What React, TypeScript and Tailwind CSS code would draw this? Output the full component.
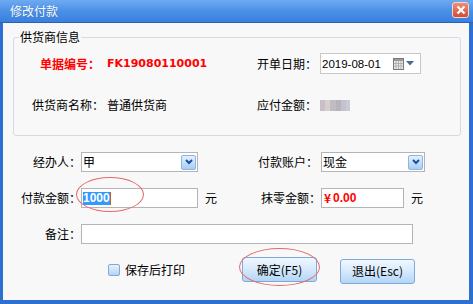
import React from "react";

const cjk = { fontFamily: '"Noto Sans CJK SC", "Noto Sans", sans-serif' };
const latin = { fontFamily: '"Liberation Sans", Arial, sans-serif' };
const tahoma = { fontFamily: '"DejaVu Sans", Verdana, sans-serif' };

function Chevron() {
  return (
    <div className="w-[15px] h-[15px] rounded-[2px] border border-[#8ab5e6] bg-gradient-to-b from-[#e4f0fd] to-[#a9cdf3] flex items-center justify-center">
      <svg width="8" height="6" viewBox="0 0 8 6">
        <path d="M1 1 L4 4 L7 1" stroke="#1b4f9c" strokeWidth="2" fill="none" />
      </svg>
    </div>
  );
}

function Select({ value, w }: { value: string; w: string }) {
  return (
    <div className={`${w} h-[20px] border border-[#b4b4b4] bg-white flex items-center justify-between pl-[1px] pr-[1px]`}>
      <span className="text-[12px] leading-[16px] text-black" style={cjk}>{value}</span>
      <Chevron />
    </div>
  );
}

export default function App() {
  return (
    <div className="w-[473px] h-[304px] bg-[#2c71d2] flex flex-col overflow-hidden" style={cjk}>
      {/* Title bar */}
      <div className="h-[23px] shrink-0 bg-gradient-to-b from-[#6eaaf0] via-[#4a90e6] to-[#3a80dc] border-b border-[#2762b8] flex items-center justify-between pl-[10px] pr-[4px]">
        <span className="text-[12px] leading-[14px] text-white" style={{ ...cjk, textShadow: "0 0 1px #3070c0" }}>修改付款</span>
        <div className="w-[17px] h-[16px] rounded-[3px] border border-[#f0d8d0] bg-gradient-to-b from-[#ee8d78] to-[#d14b35] flex items-center justify-center mb-[3px]">
          <svg width="10" height="10" viewBox="0 0 10 10">
            <path d="M1.5 1.5 L8.5 8.5 M8.5 1.5 L1.5 8.5" stroke="white" strokeWidth="2.2" />
          </svg>
        </div>
      </div>

      {/* Body */}
      <div className="relative flex-1 ml-[3px] mr-[4px] mb-[4px] bg-[#f8f8f8] flex flex-col">
        {/* Group box */}
        <div className="relative mt-[14px] ml-[10px] w-[448px] h-[99px] border border-[#d3dce6] rounded-[3px] flex flex-col pt-[15px]">
          <span className="absolute left-[5px] top-[-9px] bg-[#f8f8f8] px-[1px] text-[12px] leading-[16px] text-black" style={cjk}>供货商信息</span>
          {/* Row 1 */}
          <div className="flex items-center h-[21px]">
            <div className="pl-[26px] w-[93px] shrink-0 text-[12px] leading-[16px] font-bold text-[#ff0000]" style={cjk}>单据编号：</div>
            <div className="w-[150px] shrink-0 text-[11px] leading-[16px] font-bold text-[#ff0000]" style={tahoma}>FK19080110001</div>
            <div className="w-[63px] shrink-0 text-[12px] leading-[16px] text-black" style={cjk}>开单日期：</div>
            <div className="w-[101px] h-[21px] border border-[#c8c8c8] bg-white flex items-center justify-between pl-[1px] pr-[6px]">
              <span className="text-[11.5px] leading-[14px] text-black" style={latin}>2019-08-01</span>
              <div className="flex items-center gap-[2px]">
                <svg width="11" height="12" viewBox="0 0 11 12">
                  <rect x="0.5" y="0.5" width="10" height="11" fill="#e8e8e8" stroke="#7a7a7a" />
                  <rect x="1" y="1" width="9" height="2" fill="#9a9a9a" />
                  <path d="M3 3 V11 M5.5 3 V11 M8 3 V11 M1 5.5 H10 M1 8 H10" stroke="#a8a8a8" strokeWidth="0.8" />
                </svg>
                <svg width="8" height="5" viewBox="0 0 8 5">
                  <path d="M0 0 H8 L4 4.5 Z" fill="#4a6a94" />
                </svg>
              </div>
            </div>
          </div>
          {/* Row 2 */}
          <div className="flex items-center h-[20px] mt-[21px]">
            <div className="pl-[18px] w-[93px] shrink-0 text-[12px] leading-[16px] text-black" style={cjk}>供货商名称：</div>
            <div className="w-[150px] shrink-0 text-[12px] leading-[16px] text-black" style={cjk}>普通供货商</div>
            <div className="w-[63px] shrink-0 text-[12px] leading-[16px] text-black" style={cjk}>应付金额：</div>
            <div className="flex h-[11px] mt-[1px]">
              <div className="w-[5px] bg-[#c9bfc6]" />
              <div className="w-[5px] bg-[#d6cfcb]" />
              <div className="w-[6px] bg-[#c0bcc4]" />
              <div className="w-[5px] bg-[#b9b4bc]" />
              <div className="w-[5px] bg-[#c4c2cc]" />
              <div className="w-[4px] bg-[#c9cbd4]" />
            </div>
          </div>
        </div>

        {/* Row 3 */}
        <div className="flex items-center h-[20px] mt-[16px]">
          <div className="w-[78px] shrink-0 text-right text-[12px] leading-[16px] text-black" style={cjk}>经办人：</div>
          <Select value="甲" w="w-[117px]" />
          <div className="w-[59px] shrink-0" />
          <div className="w-[64px] shrink-0 text-right pr-[3px] text-[12px] leading-[16px] text-black" style={cjk}>付款账户：</div>
          <Select value="现金" w="w-[104px]" />
        </div>

        {/* Row 4 */}
        <div className="flex items-center h-[20px] mt-[16px]">
          <div className="w-[78px] shrink-0 text-right text-[12px] leading-[16px] text-black" style={cjk}>付款金额：</div>
          <div className="w-[117px] h-[20px] shrink-0 border border-[#b4b4b4] bg-white flex items-center pl-[1px]">
            <span className="bg-[#3399ff] text-white text-[12px] leading-[13px] font-bold" style={latin}>1000</span>
            <span className="w-[1px] h-[13px] bg-[#c06020]" />
          </div>
          <div className="w-[59px] shrink-0 pl-[7px] text-[12px] leading-[16px] text-black" style={cjk}>元</div>
          <div className="w-[64px] shrink-0 text-right text-[12px] leading-[16px] text-black" style={cjk}>抹零金额：</div>
          <div className="w-[83px] h-[20px] shrink-0 border border-[#b4b4b4] bg-white flex items-center pl-[2px] gap-[2px]">
            <span className="text-[12px] leading-[14px] font-bold text-[#ff0000]" style={cjk}>¥</span>
            <span className="text-[12px] leading-[14px] font-bold text-[#ff0000]" style={latin}>0.00</span>
          </div>
          <div className="pl-[7px] text-[12px] leading-[16px] text-black" style={cjk}>元</div>
        </div>

        {/* Row 5 */}
        <div className="flex items-center h-[20px] mt-[16px]">
          <div className="w-[78px] shrink-0 text-right text-[12px] leading-[16px] text-black" style={cjk}>备注：</div>
          <div className="w-[332px] h-[20px] border border-[#b4b4b4] bg-white" />
        </div>

        {/* Row 6 */}
        <div className="flex items-center h-[25px] mt-[13px]">
          <div className="w-[239px] shrink-0 flex items-center pl-[105px]">
            <div className="w-[12px] h-[12px] rounded-[2px] border border-[#7fa9db] bg-gradient-to-b from-[#e8f2fc] to-[#b5d3f2]" />
            <span className="ml-[5px] text-[12px] leading-[16px] text-black" style={cjk}>保存后打印</span>
          </div>
          <div className="w-[75px] h-[25px] shrink-0 rounded-[3px] border border-[#7ea9dc] bg-gradient-to-b from-[#f0f7ff] via-[#d6e9fc] to-[#b3d5f6] flex items-center justify-center">
            <span className="text-[12px] leading-[16px] text-black" style={cjk}>确定(F5)</span>
          </div>
          <div className="w-[23px] shrink-0" />
          <div className="w-[75px] h-[25px] shrink-0 mt-[3px] rounded-[3px] border border-[#7ea9dc] bg-gradient-to-b from-[#f0f7ff] via-[#d6e9fc] to-[#b3d5f6] flex items-center justify-center">
            <span className="text-[12px] leading-[16px] text-black" style={cjk}>退出(Esc)</span>
          </div>
        </div>

        {/* Red annotation ellipses */}
        <div className="absolute left-[73px] top-[154px] w-[68px] h-[35px] rounded-[50%] border border-[#e46a6a]" />
        <div className="absolute left-[236px] top-[225px] w-[81px] h-[38px] rounded-[50%] border border-[#e46a6a]" />
      </div>
    </div>
  );
}
